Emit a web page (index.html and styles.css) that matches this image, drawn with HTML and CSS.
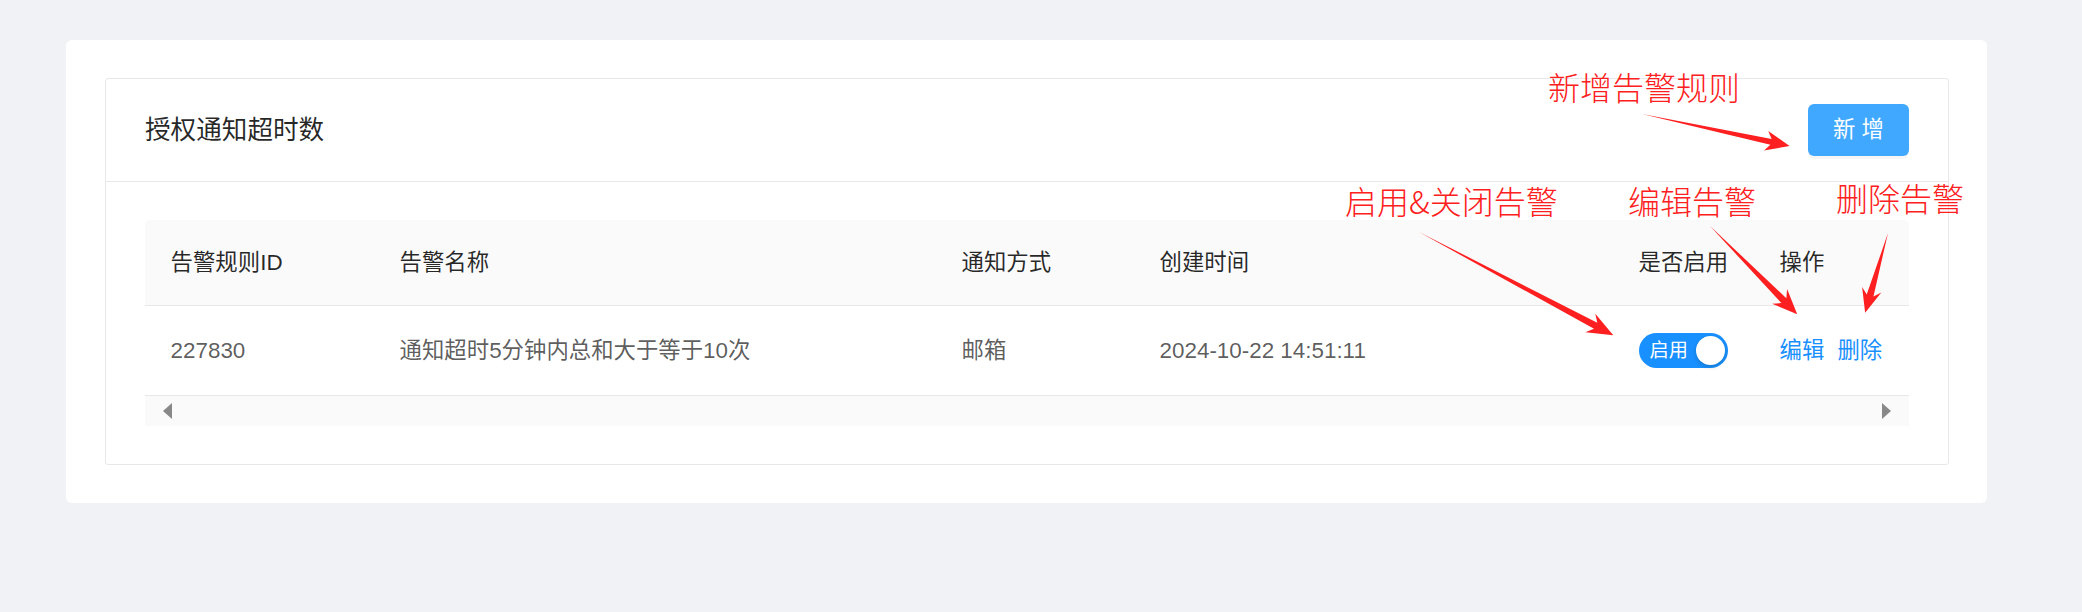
FILE: index.html
```html
<!DOCTYPE html>
<html lang="zh-CN">
<head>
<meta charset="utf-8">
<title>授权通知超时数</title>
<link rel="stylesheet" href="styles.css">
</head>
<body>
<div class="page">
  <div class="outer-card">
    <div class="card">
      <div class="card-head">
        <div class="card-title">授权通知超时数</div>
        <button class="btn-primary">新 增</button>
      </div>
      <div class="card-body">
        <div class="table">
          <div class="row head-row">
            <div class="cell">告警规则ID</div>
            <div class="cell">告警名称</div>
            <div class="cell">通知方式</div>
            <div class="cell">创建时间</div>
            <div class="cell">是否启用</div>
            <div class="cell">操作</div>
          </div>
          <div class="row body-row">
            <div class="cell">227830</div>
            <div class="cell">通知超时5分钟内总和大于等于10次</div>
            <div class="cell">邮箱</div>
            <div class="cell">2024-10-22 14:51:11</div>
            <div class="cell">
              <span class="switch"><span class="switch-text">启用</span><span class="switch-knob"></span></span>
            </div>
            <div class="cell actions">
              <a class="link">编辑</a>
              <a class="link">删除</a>
            </div>
          </div>
          <div class="scrollbar">
            <span class="arrow-left"></span>
            <span class="arrow-right"></span>
          </div>
        </div>
      </div>
    </div>
  </div>

  <span class="note note-add">新增告警规则</span>
  <span class="note note-switch">启用&amp;关闭告警</span>
  <span class="note note-edit">编辑告警</span>
  <span class="note note-del">删除告警</span>

  <svg class="arrows" width="2082" height="612" viewBox="0 0 2082 612" xmlns="http://www.w3.org/2000/svg">
    <g fill="#fe2020">
      <g transform="translate(1642 114) rotate(12.2)">
        <polygon points="0,0 132,3 127,10 151,0 127,-10 132,-3"/>
      </g>
      <g transform="translate(1419 232) rotate(27.96)">
        <polygon points="0,0 200,3.5 194,10.5 220,0 194,-10.5 200,-3.5"/>
      </g>
      <g transform="translate(1710 226) rotate(45.3)">
        <polygon points="0,0 105,3.5 99,10.5 124,0 99,-10.5 105,-3.5"/>
      </g>
      <g transform="translate(1888 233) rotate(106)">
        <polygon points="0,0 65,3.5 59,10 83,0 59,-10 65,-3.5"/>
      </g>
    </g>
  </svg>
</div>
</body>
</html>
```

FILE: styles.css
```css
* { box-sizing: border-box; }

html, body {
  margin: 0;
  padding: 0;
  background: #f0f2f5;
}

body {
  font-family: "Liberation Sans", "Noto Sans CJK SC", sans-serif;
  font-size: 22.4px;
  line-height: 1.5;
  color: rgba(0, 0, 0, 0.65);
}

.page {
  position: relative;
  width: 2082px;
  height: 612px;
  padding: 40px 0 0 66px;
}

.outer-card {
  width: 1921px;
  background: #fff;
  border-radius: 6px;
  padding: 38px 38px 38px 39px;
}

.card {
  border: 1px solid #e8e8e8;
  border-radius: 3px;
  background: #fff;
}

.card-head {
  height: 103px;
  border-bottom: 1px solid #e8e8e8;
  padding: 0 39px;
  display: flex;
  align-items: center;
  justify-content: space-between;
}

.card-title {
  font-size: 25.6px;
  color: rgba(0, 0, 0, 0.85);
  line-height: 1.5;
}

.btn-primary {
  width: 101px;
  height: 52px;
  border: 0;
  border-radius: 6px;
  background: #40a9ff;
  color: #fff;
  font-family: "Liberation Sans", "Noto Sans CJK SC", sans-serif;
  font-size: 22.4px;
  line-height: 1.5;
  padding: 0;
  box-shadow: 0 3px 0 rgba(0, 0, 0, 0.035);
}

.card-body {
  padding: 38px 39px 38px 39px;
}

.table {
  width: 1764px;
  border-radius: 5px 5px 0 0;
  overflow: hidden;
}

.row {
  display: grid;
  grid-template-columns: 229px 562px 198px 479px 141px 155px;
  border-bottom: 1px solid #e8e8e8;
}

.head-row {
  height: 86px;
  background: #fafafa;
  color: rgba(0, 0, 0, 0.85);
}

.body-row {
  height: 90px;
  background: #fff;
}

.cell {
  display: flex;
  align-items: center;
  padding: 0 25.6px;
  white-space: nowrap;
  line-height: 1.5;
}

.switch {
  display: inline-flex;
  align-items: center;
  justify-content: space-between;
  width: 89px;
  height: 35px;
  border-radius: 18px;
  background: #1890ff;
  padding: 0 3px 0 11px;
}

.switch-text {
  color: #fff;
  font-size: 19.2px;
  line-height: 1;
}

.switch-knob {
  width: 29px;
  height: 29px;
  border-radius: 50%;
  background: #fff;
  box-shadow: 0 2px 4px rgba(0, 35, 11, 0.2);
}

.actions {
  gap: 13px;
}

.link {
  color: #1890ff;
  cursor: pointer;
}

.scrollbar {
  height: 30px;
  background: #fafafa;
  display: flex;
  align-items: center;
  justify-content: space-between;
  padding: 0 18px;
}

.arrow-left {
  width: 0;
  height: 0;
  border-top: 8.5px solid transparent;
  border-bottom: 8.5px solid transparent;
  border-right: 9px solid #888;
}

.arrow-right {
  width: 0;
  height: 0;
  border-top: 8.5px solid transparent;
  border-bottom: 8.5px solid transparent;
  border-left: 9px solid #888;
}

.note {
  position: absolute;
  font-family: "Noto Sans CJK SC", sans-serif;
  font-weight: 300;
  font-size: 32px;
  line-height: 32px;
  color: #fe2020;
  white-space: nowrap;
}

.note-add { left: 1548px; top: 70px; }
.note-switch { left: 1345px; top: 184px; }
.note-edit { left: 1628px; top: 184px; }
.note-del { left: 1836px; top: 181px; }

.arrows {
  position: absolute;
  left: 0;
  top: 0;
  pointer-events: none;
}
```
